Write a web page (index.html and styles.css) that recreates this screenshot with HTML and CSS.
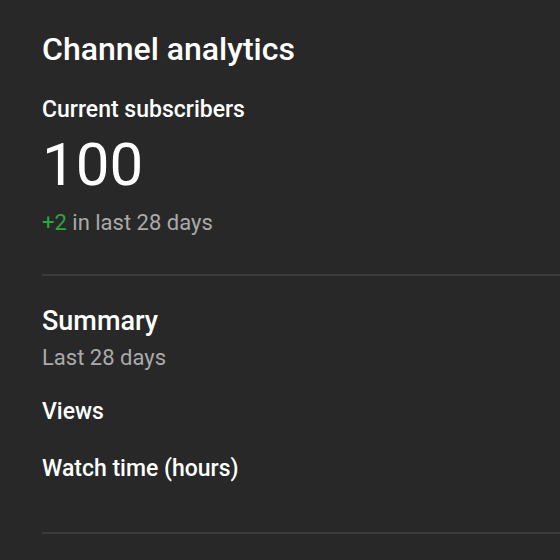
FILE: index.html
```html
<!DOCTYPE html>
<html lang="en">
<head>
  <meta charset="UTF-8">
  <meta name="viewport" content="width=device-width, initial-scale=1.0">
  <title>Channel analytics</title>
  <link rel="stylesheet" href="styles.css">
</head>
<body>
  <div class="card">
    <h1 class="card-title">Channel analytics</h1>

    <!-- Подписчики -->
    <div class="section subs">
      <div class="label">Current subscribers</div>
      <div class="big-number">100</div>
      <div class="change"><span class="plus">+2</span> in last 28 days</div>
    </div>

    <!-- Сводка -->
    <div class="section summary">
      <h2 class="section-title">Summary</h2>
      <div class="period">Last 28 days</div>
      <div class="metric">Views</div>
      <div class="metric">Watch time (hours)</div>
    </div>

    <div class="section"></div>
  </div>
</body>
</html>
```

FILE: styles.css
```css
body {
  background: #282828;
  color: #fff;
  margin: 0;
  font-family: Roboto, "Liberation Sans", Arial, sans-serif;
  height: 100vh;
  overflow: hidden;
}

.card {
  padding: 29px 0 0 42px;
  width: 700px;
}

.card-title {
  margin: 0;
  font-size: 32px;
  font-weight: 500;
  line-height: 40px;
}

.section {
  border-top: 2px solid #3b3b3b;
}

.subs {
  border-top: none;
  padding: 27px 0 37px;
}

.label {
  font-size: 23px;
  font-weight: 500;
  line-height: 28px;
}

.big-number {
  font-size: 60px;
  line-height: 66px;
  margin-top: 8px;
}

.change {
  font-size: 22px;
  color: #aaa;
  line-height: 28px;
  margin-top: 11px;
}

.plus {
  color: #2ba640;
}

.summary {
  padding: 29px 0 49px;
}

.section-title {
  margin: 0;
  font-size: 27px;
  font-weight: 500;
  line-height: 32px;
}

.period {
  font-size: 22px;
  color: #aaa;
  line-height: 28px;
  margin-top: 7px;
}

.metric {
  font-size: 23px;
  font-weight: 500;
  line-height: 28px;
  margin-top: 26px;
}

.metric + .metric {
  margin-top: 29px;
}
```
